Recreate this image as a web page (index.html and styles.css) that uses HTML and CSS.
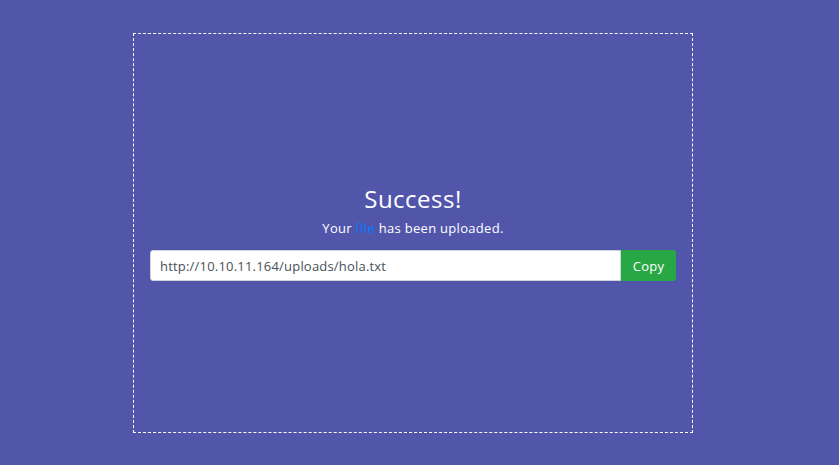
FILE: index.html
```html
<!DOCTYPE html>
<html lang="en">

<head>
    <meta charset="utf-8">
    <title>Upload</title>
    <link rel="stylesheet" href="styles.css">
</head>

<body>
    <div class="wrap">
        <div class="drop">
            <div class="result">
                <h2 class="title">Success!</h2>
                <p class="msg">Your <a href="#">file</a> has been uploaded.</p>
                <div class="group">
                    <input type="text" class="link" value="http://10.10.11.164/uploads/hola.txt" readonly />
                    <button class="btn">Copy</button>
                </div>
            </div>
        </div>
    </div>
</body>

</html>
```

FILE: styles.css
```css
* {
    padding: 0;
    margin: 0;
    box-sizing: border-box;
}

html,
body {
    height: 100%;
    background: #5256ab;
    font-family: "Open Sans", "Noto Sans", sans-serif;
    color: #fff;
}

.wrap {
    padding-top: 33px;
    padding-left: 133px;
}

.drop {
    width: 560px;
    height: 400px;
    border: 1px dashed #fff;
    display: flex;
    align-items: center;
    justify-content: center;
    padding: 0 16px;
}

.result {
    width: 100%;
    text-align: center;
    margin-top: -1px;
}

.title {
    font-size: 24px;
    font-weight: 400;
    line-height: 30px;
    letter-spacing: 0.5px;
}

.msg {
    font-size: 13px;
    line-height: 18px;
    margin-top: 5px;
    letter-spacing: 0.3px;
}

.msg a {
    color: #007bff;
    text-decoration: none;
}

.group {
    display: flex;
    margin-top: 13px;
}

.link {
    flex: 1;
    height: 31px;
    border: 1px solid #ced4da;
    border-radius: 3px 0 0 3px;
    padding: 0 9px;
    font-family: inherit;
    font-size: 13px;
    letter-spacing: 0.2px;
    color: #495057;
    outline: none;
}

.btn {
    width: 55px;
    height: 31px;
    border: 0;
    border-radius: 0 3px 3px 0;
    background: #28a745;
    color: #fff;
    font-family: inherit;
    font-size: 13px;
    letter-spacing: 0.3px;
    cursor: pointer;
}
```
